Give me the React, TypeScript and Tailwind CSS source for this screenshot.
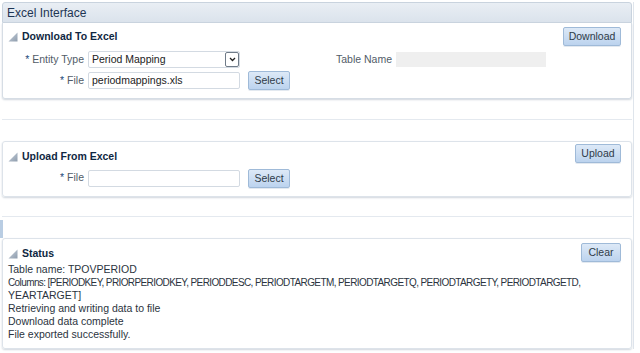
import React from "react";

const font = { fontFamily: '"Liberation Sans", Arial, sans-serif' };

function Tri() {
  return (
    <svg width="10" height="10" viewBox="0 0 10 10" className="shrink-0">
      <defs>
        <linearGradient id="tg" x1="0" y1="0" x2="1" y2="1">
          <stop offset="0" stopColor="#c9d2dc" />
          <stop offset="1" stopColor="#8e9cad" />
        </linearGradient>
      </defs>
      <polygon points="9.5,0.5 9.5,9.5 0.5,9.5" fill="url(#tg)" />
    </svg>
  );
}

function Btn({ children, className = "" }: { children: React.ReactNode; className?: string }) {
  return (
    <button
      className={`h-[19px] rounded-[2px] border border-[#9fbad8] bg-gradient-to-b from-[#dde9f7] to-[#bcd3ee] text-[10.5px] leading-none text-[#2f3b48] shadow-[0_1px_0_#e3e9f0] ${className}`}
    >
      {children}
    </button>
  );
}

function Label({ text }: { text: string }) {
  return (
    <span className="w-[76px] shrink-0 text-right text-[10.5px] text-[#515c68]">
      <span className="text-[#1e4a7a]">*</span> {text}
    </span>
  );
}

function PanelTitle({ text }: { text: string }) {
  return (
    <div className="flex items-center gap-[4px]">
      <Tri />
      <span className="text-[10.5px] font-bold text-[#0f2742]">{text}</span>
    </div>
  );
}

export default function App() {
  return (
    <div style={font} className="h-[353px] w-[640px] overflow-hidden bg-white">
      <div className="ml-[2px] mt-[2px] w-[632px] border-r border-[#dfe5ec] pr-[1px]">
        {/* header */}
        <div className="flex h-[21px] items-center rounded-t-[3px] border border-[#c9d3de] bg-gradient-to-b from-[#e9eef4] to-[#dbe3ec] px-[4px] text-[12px] text-[#1e3553]">
          Excel Interface
        </div>

        {/* download */}
        <div className="h-[76px] rounded-b-[3px] border border-t-0 border-[#d6dde5] px-[5px] pt-[4px] shadow-[0_1px_2px_#d0d6dd]">
          <div className="flex items-start justify-between">
            <div className="pt-[2px]">
              <PanelTitle text="Download To Excel" />
            </div>
            <Btn className="mr-[5px] w-[58px]">Download</Btn>
          </div>
          <div className="mt-[5px] flex items-center">
            <Label text="Entity Type" />
            <div className="ml-[4px] flex h-[17px] w-[152px] items-center rounded-[2px] border border-[#d3dae2] pl-[3px] text-[10.5px] text-[#222]">
              <span className="flex-1">Period Mapping</span>
              <span className="flex h-[15px] w-[14px] items-center justify-center rounded-[2px] border border-[#6f7b88] bg-white">
                <svg width="7" height="5" viewBox="0 0 7 5">
                  <path d="M1 1 L3.5 3.5 L6 1" stroke="#222" strokeWidth="1.3" fill="none" />
                </svg>
              </span>
            </div>
            <span className="ml-[92px] w-[60px] text-right text-[10.5px] text-[#515c68]">Table Name</span>
            <div className="ml-[4px] h-[15px] w-[150px] bg-[#efefef]" />
          </div>
          <div className="mt-[3px] flex items-center">
            <Label text="File" />
            <div className="ml-[4px] flex h-[17px] w-[152px] items-center rounded-[2px] border border-[#d3dae2] pl-[3px] text-[10.5px] text-[#222]">
              periodmappings.xls
            </div>
            <Btn className="ml-[8px] w-[42px]">Select</Btn>
          </div>
        </div>

        {/* spacers */}
        <div className="h-[21px] border-b border-[#e4e9ef]" />
        <div className="h-[21px]" />

        {/* upload */}
        <div className="h-[56px] rounded-[3px] border border-[#dde3ea] px-[5px] pt-[2px] shadow-[0_1px_2px_#d0d6dd]">
          <div className="flex items-start justify-between">
            <div className="pt-[5px]">
              <PanelTitle text="Upload From Excel" />
            </div>
            <Btn className="mr-[5px] w-[46px]">Upload</Btn>
          </div>
          <div className="mt-[4px] flex items-center">
            <Label text="File" />
            <div className="ml-[4px] h-[17px] w-[152px] rounded-[2px] border border-[#d3dae2]" />
            <Btn className="ml-[8px] w-[42px]">Select</Btn>
          </div>
        </div>

        <div className="h-[20px] border-b border-[#e4e9ef]" />
        <div className="relative h-[21px]">
          <div className="absolute -left-[2px] top-[3px] h-[18px] w-[3px] bg-[#b9cde3]" />
        </div>

        {/* status */}
        <div className="h-[111px] rounded-[3px] border border-[#dde3ea] px-[5px] pt-[4px] shadow-[0_1px_2px_#d0d6dd]">
          <div className="flex items-start justify-between">
            <div className="pt-[3px]">
              <PanelTitle text="Status" />
            </div>
            <Btn className="mr-[5px] w-[40px]">Clear</Btn>
          </div>
          <div className="mt-[1px] whitespace-nowrap text-[10.5px] leading-[13px] text-[#2b3440]">
            <div>Table name: TPOVPERIOD</div>
            <div className="text-[10px] tracking-[-0.6px]">
              Columns: [PERIODKEY, PRIORPERIODKEY, PERIODDESC, PERIODTARGETM, PERIODTARGETQ, PERIODTARGETY, PERIODTARGETD,
            </div>
            <div>YEARTARGET]</div>
            <div>Retrieving and writing data to file</div>
            <div>Download data complete</div>
            <div>File exported successfully.</div>
          </div>
        </div>
      </div>
    </div>
  );
}
